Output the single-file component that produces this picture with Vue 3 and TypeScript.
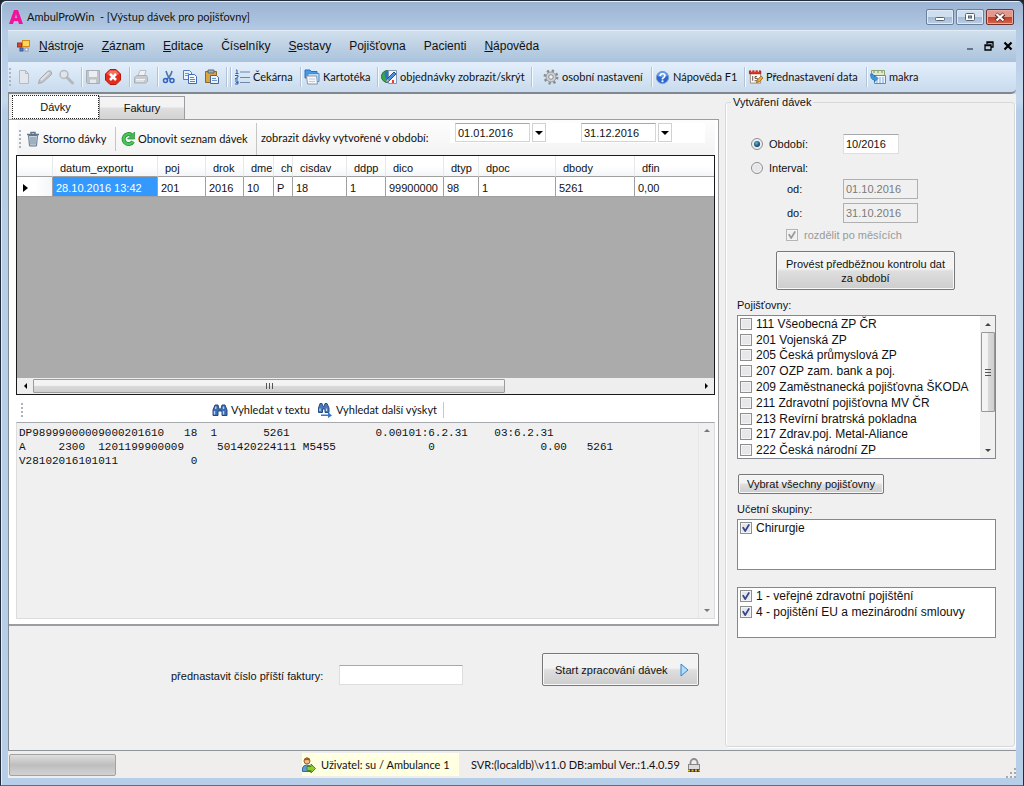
<script setup lang="ts">
import { ref } from 'vue'

interface MenuItem { key: string; rest: string }
interface CheckItem { label: string; checked: boolean }
interface Column { name: string; value: string; width: number }

const menu: MenuItem[] = [
  { key: 'N', rest: 'ástroje' },
  { key: 'Z', rest: 'áznam' },
  { key: 'E', rest: 'ditace' },
  { key: '', rest: 'Číselníky' },
  { key: 'S', rest: 'estavy' },
  { key: '', rest: 'Pojišťovna' },
  { key: '', rest: 'Pacienti' },
  { key: 'N', rest: 'ápověda' },
]

const columns: Column[] = [
  { name: 'datum_exportu', value: '28.10.2016 13:42', width: 105 },
  { name: 'poj', value: '201', width: 48 },
  { name: 'drok', value: '2016', width: 38 },
  { name: 'dme', value: '10', width: 30 },
  { name: 'ch', value: 'P', width: 19 },
  { name: 'cisdav', value: '18', width: 54 },
  { name: 'ddpp', value: '1', width: 39 },
  { name: 'dico', value: '99900000', width: 58 },
  { name: 'dtyp', value: '98', width: 35 },
  { name: 'dpoc', value: '1', width: 77 },
  { name: 'dbody', value: '5261', width: 79 },
  { name: 'dfin', value: '0,00', width: 79 },
]

const insurers = ref<CheckItem[]>([
  '111 Všeobecná ZP ČR',
  '201 Vojenská ZP',
  '205 Česká průmyslová ZP',
  '207 OZP zam. bank a poj.',
  '209 Zaměstnanecká pojišťovna ŠKODA',
  '211 Zdravotní pojišťovna MV ČR',
  '213 Revírní bratrská pokladna',
  '217 Zdrav.poj. Metal-Aliance',
  '222 Česká národní ZP',
].map((label) => ({ label, checked: false })))

const groups = ref<CheckItem[]>([{ label: 'Chirurgie', checked: true }])
const kinds = ref<CheckItem[]>([
  { label: '1 - veřejné zdravotní pojištění', checked: true },
  { label: '4 - pojištění EU a mezinárodní smlouvy', checked: true },
])

/* Fixed-width record: each field starts at its own character column. */
function record(fields: [number, string][]): string {
  return fields.reduce((line, [at, text]) => line.padEnd(at) + text, '')
}
const batchText = ref([
  record([[0, 'DP98999000009000201610'], [25, '18'], [29, '1'], [37, '5261'], [54, '0.00101:6.2.31'], [72, '03:6.2.31']]),
  record([[0, 'A'], [6, '2300'], [12, '1201199900009'], [30, '501420224111'], [43, 'M5455'], [62, '0'], [79, '0.00'], [86, '5261']]),
  record([[0, 'V28102016101011'], [26, '0']]),
].join('\n'))

const mode = ref('obdobi')
const dateFrom = ref('01.01.2016')
const dateTo = ref('31.12.2016')
const period = ref('10/2016')
const invoiceNo = ref('')

function selectAll() {
  insurers.value.forEach((i) => { i.checked = true })
}
</script>

<template>
  <div class="window">
    <header class="titlebar">
      <svg class="logo" viewBox="0 0 14 14" width="14" height="14"><path d="M0 14 5 0h4l5 14h-4l-1-3H5l-1 3ZM6 8h2L7 4Z" fill="#f0149b" fill-rule="evenodd" /></svg>
      <h1>AmbulProWin&nbsp; - [Výstup dávek pro pojišťovny]</h1>
      <div class="winbtns">
        <button aria-label="Minimalizovat"><svg width="12" height="10" viewBox="0 0 12 10"><rect x="1.500" y="5.500" width="9" height="3" rx="1" fill="#fff" stroke="#56616f" /></svg></button>
        <button aria-label="Obnovit okno"><svg width="12" height="10" viewBox="0 0 12 10"><rect x="1.500" y="1.500" width="9" height="7" rx="1" fill="#fff" stroke="#56616f" /><rect x="4.500" y="4" width="3" height="2" fill="#9cb4d0" stroke="#56616f" /></svg></button>
        <button class="close" aria-label="Zavřít"><svg width="12" height="10" viewBox="0 0 12 10"><path d="m2 2 8 6.500M10 2 2 8.500" stroke="#5d2c2c" stroke-width="4" /><path d="m2.500 2 7 6.500M9.500 2l-7 6.500" stroke="#fff" stroke-width="2.200" /></svg></button>
      </div>
    </header>

    <nav class="menubar">
      <svg class="appicon" width="13" height="12" viewBox="0 0 13 12"><rect x="5.500" y=".5" width="7" height="6" fill="#ffd65a" stroke="#d28a1c" /><rect x=".5" y="3" width="4" height="4" fill="#d8432c" stroke="#9c3424" /><rect x="3" y="8" width="3" height="3" fill="#5a7fd0" stroke="#36549c" /><rect x="8" y="8" width="3" height="3" fill="#fff" stroke="#8496b0" /></svg>
      <button v-for="m in menu" :key="m.key + m.rest"><u v-if="m.key">{{ m.key }}</u>{{ m.rest }}</button>
      <div class="mdibtns">
        <button aria-label="Minimalizovat dokument"><svg width="10" height="10" viewBox="0 0 10 10"><path d="M2 8h6" stroke="#4c5663" stroke-width="1.500" /></svg></button>
        <button aria-label="Obnovit dokument"><svg width="10" height="10" viewBox="0 0 10 10"><path d="M3 3V1h6v5H7M1 4h6v5H1ZM3 1.500h6M1 4.500h6" fill="none" stroke="#000" stroke-width="1.300" /></svg></button>
        <button aria-label="Zavřít dokument"><svg width="10" height="10" viewBox="0 0 10 10"><path d="m1.500 1.500 7 7M8.500 1.500l-7 7" stroke="#000" stroke-width="2.200" /></svg></button>
      </div>
    </nav>

    <div class="toolbar">
      <div class="tg first">
        <span class="grip"></span>
        <button aria-label="Nový"><svg width="16" height="16" viewBox="0 0 16 16"><path d="M3.500 1.500h6l3 3v10h-9Z" fill="#e3e6ea" stroke="#b4bac2" /><path d="M9.500 1.500v3h3" fill="none" stroke="#b4bac2" /></svg></button>
        <button aria-label="Upravit"><svg width="16" height="16" viewBox="0 0 16 16"><path d="m1.500 14.500 1-4 8-8q2-1.500 3.500 0t0 3.500l-8.500 7.500Z" fill="#c4c8ce" stroke="#a2a8b0" /><path d="m4 11 8-7.500" stroke="#e6e8eb" stroke-width="1.500" /></svg></button>
        <button aria-label="Hledat"><svg width="16" height="16" viewBox="0 0 16 16"><circle cx="6" cy="5.500" r="4" fill="#e0e5ea" stroke="#b4bac2" stroke-width="1.500" /><path d="m9 8.500 5.500 5.500" stroke="#b4b8be" stroke-width="3" stroke-linecap="round" /></svg></button>
      </div>
      <div class="tg">
        <button aria-label="Uložit"><svg width="16" height="16" viewBox="0 0 16 16"><path d="M1.500 1.500h13v13h-12l-1-1Z" fill="#bfc4ca" stroke="#a7adb5" /><path d="M4 2h8v6H4Z" fill="#eceff2" /><path d="M5 10.500h6V14H5Z" fill="#e5e8ec" /></svg></button>
        <button aria-label="Storno"><svg width="16" height="16" viewBox="0 0 16 16"><path d="M5 .5h6L15.500 5v6L11 15.500H5L.5 11V5Z" fill="#e42c1c" stroke="#b3170d" /><path d="M5 1.500h6L14 5Q8 8 2 5Z" fill="#f4735f" /><path d="m5 5 6 6M11 5l-6 6" stroke="#fff" stroke-width="2.500" /></svg></button>
      </div>
      <div class="tg">
        <button aria-label="Tisk"><svg width="16" height="16" viewBox="0 0 16 16"><path d="m5 7 2-5.500h6L11.500 7" fill="#f0f2f5" stroke="#b9bec5" /><path d="M1.500 8.500 4 6.500h9.500l1 2v4l-2 1.500h-11Z" fill="#c8ccd1" stroke="#a9afb7" /><path d="M3 10.500h9M3 12h8" stroke="#f3f4f6" /></svg></button>
      </div>
      <div class="tg wide">
        <button aria-label="Vyjmout"><svg width="14" height="16" viewBox="0 0 14 16"><path d="M4 2q1 5 5 9M10 2Q9 7 4 11" fill="none" stroke="#5475a5" stroke-width="1.600" /><circle cx="3.500" cy="11.500" r="2" fill="none" stroke="#2e64c4" stroke-width="1.500" /><circle cx="10" cy="11.500" r="2" fill="none" stroke="#2e64c4" stroke-width="1.500" /></svg></button>
        <button aria-label="Kopírovat"><svg width="16" height="16" viewBox="0 0 16 16"><path d="M1.500 1.500h6l2 2v7h-8Z" fill="#e8f1fd" stroke="#4d7ec8" /><path d="M3 4.500h4M3 6.500h4" stroke="#6c9be0" /><path d="M6.500 5.500h6l2 2v7h-8Z" fill="#f5f9ff" stroke="#3c6cb8" /><path d="M8 8.500h4M8 10.500h5M8 12.500h5" stroke="#5186d8" /></svg></button>
        <button aria-label="Vložit"><svg width="16" height="16" viewBox="0 0 16 16"><path d="M1.500 2.500h11v11h-11Z" fill="#d8a545" stroke="#8c6728" /><path d="M4 1h6v3H4Z" fill="#a4acb8" stroke="#606873" /><path d="M6.500 6.500h6l2 2v6h-8Z" fill="#edf3fb" stroke="#49658f" /><path d="M8 9.500h4M8 11.500h5" stroke="#6c94cc" /></svg></button>
      </div>
      <div class="tg"></div>
      <div class="tg">
        <button><svg width="16" height="16" viewBox="0 0 16 16"><path d="M2 1h1v3M1.500 4.500h3M1 6.500h3v1.500L1 10h3M1 12h3v3H1M2 13.500h2" fill="none" stroke="#2c5fae" /><path d="M6 3h10M6 8.500h10M6 13.500h10" stroke="#6d87a6" /></svg>Čekárna</button>
      </div>
      <div class="tg">
        <button><svg width="16" height="16" viewBox="0 0 16 16"><path d="M1 3.500V1h5l1 1.500h6V9H1Z" fill="#469ae8" stroke="#2a6fbe" /><path d="M4 4.500h11v8H4Z" fill="#b8ddfb" stroke="#4789cc" /><path d="M2.500 7h10l1 8h-10Z" fill="#f5f8fb" stroke="#8a98a8" /><path d="M5 10h6M5 12.500h6" stroke="#c2cad4" /></svg>Kartotéka</button>
      </div>
      <div class="tg">
        <button><svg width="16" height="16" viewBox="0 0 16 16"><circle cx="6.500" cy="7.500" r="6" fill="#39a943" stroke="#237032" /><path d="M7 1.500q-5 1-3 6 1 4 3.500 6Q14 12 11 3Z" fill="#2d74c7" /><path d="M7.500 1.500h8v13h-8Z" fill="#f6f8fb" stroke="#8496b0" /><path d="m5 13 1-3 7-7 2 2-7 7Z" fill="#4a91e0" stroke="#215596" /><path d="m5 13 1-3 2 2Z" fill="#f1be70" /><path d="M12 11v3" stroke="#e04432" stroke-width="2" /></svg>objednávky zobrazit/skrýt</button>
      </div>
      <div class="tg gear">
        <button><svg width="16" height="16" viewBox="0 0 16 16"><circle cx="8" cy="8" r="6" fill="none" stroke="#898c91" stroke-width="3" stroke-dasharray="2.200 2.512" /><circle cx="8" cy="8" r="5" fill="#cfd1d4" stroke="#96999e" /><circle cx="8" cy="8" r="2.300" fill="#eef4fa" stroke="#8a8d92" /></svg>osobní nastavení</button>
      </div>
      <div class="tg">
        <button><svg width="15" height="15" viewBox="0 0 16 16"><circle cx="8" cy="8" r="6.500" fill="#2b66cd" stroke="#7e9cc9" /><path d="M2.500 6.500a5.500 5.500 0 0 1 11 0Q8 9 2.500 6.500" fill="#669bea" /><path d="M5.500 6.500q0-2.500 2.500-2.500t2.500 2Q10.500 7.500 8 9v1" fill="none" stroke="#fff" stroke-width="1.800" /><rect x="7" y="11" width="2" height="2" fill="#fff" /></svg>Nápověda F1</button>
      </div>
      <div class="tg">
        <button><svg width="15" height="16" viewBox="0 0 16 16"><path d="M2.500 2.500h11v12h-11Z" fill="#fffaf3" stroke="#97867b" /><path d="M1.500 1.500h12v3h-12Z" fill="#d8392b" stroke="#a32219" /><path d="M4 .5v2M7.500.5v2M11 .5v2" stroke="#fff" /><path d="M5 7v5M9.500 7.500H7.500v2H10v2.500H7" fill="none" stroke="#5b4d48" /><path d="m9 14 1-3 4-4 2 2-4 4Z" fill="#f2ac38" stroke="#9e6a22" /></svg>Přednastavení data</button>
      </div>
      <div class="tg">
        <button><svg width="16" height="16" viewBox="0 0 16 16"><path d="M1.500 1.500h13v5h-13Z" fill="#e2ebd2" stroke="#8ea275" /><path d="M3 3h2M7 3h2M11 3h2" stroke="#6a9346" /><path d="M4.500 6.500h11v8h-11Z" fill="#f1f6fc" stroke="#5a8bc2" /><path d="M6 9h8M6 11h8M6 13h8" stroke="#7aa6db" stroke-dasharray="2 1" /><path d="M.5 5q0 6 4 6v2l3.500-3.500L4.500 6v2Q3 8 3 5Z" fill="#3e97dd" stroke="#2068aa" stroke-width=".6" /></svg>makra</button>
      </div>
    </div>

    <main class="content">
      <section class="left">
        <div class="tabs" role="tablist">
          <button role="tab" class="tab active" aria-selected="true">Dávky</button>
          <button role="tab" class="tab" aria-selected="false">Faktury</button>
        </div>
        <div class="panel">
          <div class="ptools">
            <div class="pg">
              <span class="grip"></span>
              <button><svg width="14" height="16" viewBox="0 0 14 16"><path d="M2.500 4.500h9l-1 10.500h-7Z" fill="#cbd5df" stroke="#61788f" /><path d="M5 6v7.500M7 6v7.500M9 6v7.500" stroke="#738ba3" /><path d="M1 3.500h12M5 3V1.500h4V3" fill="none" stroke="#61788f" stroke-width="1.500" /></svg>Storno dávky</button>
            </div>
            <div class="pg">
              <button><svg width="14" height="16" viewBox="0 0 14 16"><path d="M12 10.500A5 5 0 1 1 10.500 4" fill="none" stroke="#27943a" stroke-width="4" /><path d="M12 10.500A5 5 0 1 1 10.500 4" fill="none" stroke="#4dc45b" stroke-width="2.400" /><path d="M13.500 1v7h-7Z" fill="#44b853" stroke="#27943a" stroke-width=".7" /></svg>Obnovit seznam dávek</button>
            </div>
            <div class="pg range">
              <span class="rangelabel">zobrazit dávky vytvořené v období:</span>
              <div class="dates">
                <div class="combo"><input v-model="dateFrom" type="text" aria-label="Datum od" /><button aria-label="Vybrat datum od"><i></i></button></div>
                <div class="combo"><input v-model="dateTo" type="text" aria-label="Datum do" /><button aria-label="Vybrat datum do"><i></i></button></div>
              </div>
            </div>
          </div>

          <div class="gridbox">
            <div class="gridarea">
              <table>
                <colgroup><col width="36" /><col v-for="(c, n) in columns" :key="c.name" :width="n < columns.length - 1 ? c.width : undefined" /></colgroup>
                <thead><tr><th></th><th v-for="c in columns" :key="c.name">{{ c.name }}</th></tr></thead>
                <tbody>
                  <tr>
                    <td class="rowhead"><i class="tri-right"></i></td>
                    <td v-for="(c, n) in columns" :key="c.name" :class="{ sel: n === 0 }">{{ c.value }}</td>
                  </tr>
                </tbody>
              </table>
            </div>
            <div class="hscroll">
              <button aria-label="Posunout vlevo"><i class="tri-left"></i></button>
              <div class="htrack"><div class="hthumb"><i></i></div></div>
              <button aria-label="Posunout vpravo"><i class="tri-right small"></i></button>
            </div>
          </div>

          <div class="finder">
            <span class="grip"></span>
            <div class="findbtns">
              <button><svg width="16" height="14" viewBox="0 0 16 14"><path d="M1 12.500V7l2-5h3l1 4h2l1-4h3l2 5v5.500h-5V8H6v4.500Z" fill="#3d6cb0" stroke="#24497f" /><path d="M2.500 8v3.500M11.500 8v3.500M4 3.500 3.500 6M11.500 3.500V6" stroke="#b5d0f2" stroke-width="1.400" /></svg>Vyhledat v textu</button>
              <button><svg width="16" height="16" viewBox="0 0 16 16"><path d="M1.500 10.500V6L3 1.500h2l1 3h1l1-3h2L12 6v4.500H8V7H5.500v3.500Z" fill="#4b78b9" stroke="#284d83" /><path d="M3 6.500V9M9.500 6.500V9" stroke="#c0d7f4" stroke-width="1.300" /><path d="M4 12.500h7V10l4 3.500-4 2.500v-2H4Z" fill="#3277cc" /></svg>Vyhledat další výskyt</button>
            </div>
          </div>

          <div class="textbox">
            <textarea v-model="batchText" readonly wrap="off" aria-label="Obsah dávky"></textarea>
            <div class="vscroll dim"><i class="tri-up"></i><i class="tri-down"></i></div>
          </div>
        </div>

        <div class="startrow">
          <label for="invoice">přednastavit číslo příští faktury:</label>
          <input id="invoice" v-model="invoiceNo" type="text" />
          <button class="btn start">Start zpracování dávek<svg width="9" height="14" viewBox="0 0 9 14"><path d="M1 1v12l7-6Z" fill="#b2dbf8" stroke="#3485cf" /></svg></button>
        </div>
      </section>

      <fieldset class="right">
        <legend>Vytváření dávek</legend>
        <div class="period">
          <label class="opt"><input v-model="mode" type="radio" name="mode" value="obdobi" />Období:</label>
          <input v-model="period" class="field short" type="text" aria-label="Období" />
          <label class="opt"><input v-model="mode" type="radio" name="mode" value="interval" />Interval:</label>
          <span></span>
          <label class="sub" for="od">od:</label>
          <input id="od" class="field" type="text" value="01.10.2016" disabled />
          <label class="sub" for="do">do:</label>
          <input id="do" class="field" type="text" value="31.10.2016" disabled />
          <label class="split"><input type="checkbox" checked disabled />rozdělit po měsících</label>
        </div>
        <button class="btn check">Provést předběžnou kontrolu dat<br />za období</button>

        <p class="cap">Pojišťovny:</p>
        <div class="list insurers">
          <div class="items">
            <label v-for="i in insurers" :key="i.label"><input v-model="i.checked" type="checkbox" />{{ i.label }}</label>
          </div>
          <div class="vscroll"><i class="tri-up"></i><div class="vthumb"><i></i></div><i class="tri-down"></i></div>
        </div>
        <button class="btn all" @click="selectAll">Vybrat všechny pojišťovny</button>

        <p class="cap">Učetní skupiny:</p>
        <div class="list box">
          <div class="items"><label v-for="i in groups" :key="i.label"><input v-model="i.checked" type="checkbox" />{{ i.label }}</label></div>
        </div>
        <div class="list box kinds">
          <div class="items"><label v-for="i in kinds" :key="i.label"><input v-model="i.checked" type="checkbox" />{{ i.label }}</label></div>
        </div>
      </fieldset>
    </main>

    <footer class="status">
      <div class="progress" role="progressbar" aria-label="Průběh"></div>
      <div class="user">
        <svg width="14" height="16" viewBox="0 0 14 16"><circle cx="5" cy="4" r="3" fill="#eebd8c" stroke="#9b5a24" /><path d="M2 3.500Q3 0 5 .5q3 0 3 3-3-1-6 0" fill="#a65c25" /><path d="M.5 14.500V11Q1 8 5 8t4.500 3v3.500Z" fill="#5f9be0" stroke="#3b6ba6" /><path d="M5 9.500h4V7l4.500 4.500L9 16v-2.500H5Z" fill="#8ccc30" stroke="#4e861b" /></svg>
        Uživatel: su / Ambulance 1
      </div>
      <div class="server">SVR:(localdb)\v11.0 DB:ambul Ver.:1.4.0.59</div>
      <svg class="lock" width="14" height="14" viewBox="0 0 14 14"><path d="M3.500 8V4.500a3.500 3.500 0 0 1 7 0V8" fill="none" stroke="#8e8e8e" stroke-width="1.800" /><rect x="1.500" y="6.500" width="11" height="7" fill="#dcdcdc" stroke="#868686" /><path d="M1 12.500h12" stroke="#3c372d" stroke-width="3" /><path d="M1 12.500h12" stroke="#e5b73a" stroke-width="2" stroke-dasharray="2 1.500" /></svg>
      <svg class="sizer" width="10" height="10" viewBox="0 0 10 10"><path d="M8 1h2M4 5h2M8 5h2M0 9h2M4 9h2M8 9h2" stroke="#a9a9a9" stroke-width="2" /></svg>
    </footer>
  </div>
</template>

<style>
body {
  margin: 0;
  background: #1b2531;
}
</style>

<style scoped>
* {
  box-sizing: border-box;
}
button,
input,
textarea {
  margin: 0;
  font: inherit;
  color: inherit;
}
button {
  padding: 0;
  border: 0;
  background: none;
  white-space: nowrap;
}
svg {
  display: block;
  flex: none;
}
.window {
  display: flex;
  flex-direction: column;
  min-height: 100vh;
  padding: 1px 7px 7px;
  border: 1px solid #232c38;
  border-bottom-color: #0f8fa0;
  border-radius: 6px 6px 0 0;
  background: linear-gradient(#9ab3d1, #b4cae5 30px, #c5d9ed 100px, #b6cde8 110px, #b6cee8);
  box-shadow: inset 1px 1px 0 #e4eefa;
  font: 11px/14px "Liberation Sans", Arial, sans-serif;
  color: #111;
}

/* Title and menu */
.titlebar {
  display: flex;
  align-items: center;
  height: 28px;
  padding: 2px 2px 0 1px;
}
h1 {
  flex: 1;
  margin: 0 0 0 4px;
  font: 11px/16px Lato, sans-serif;
}
.winbtns {
  display: flex;
  gap: 2px;
  padding-bottom: 1px;
}
.winbtns button {
  display: grid;
  place-items: center;
  width: 28px;
  height: 16px;
  border: 1px solid #6c7f98;
  border-radius: 2px;
  background: linear-gradient(#cfdeef 48%, #a3bad7 50%, #b9cee6);
  box-shadow: inset 0 0 0 1px #dfeaf6;
}
.winbtns .close {
  border-color: #73312a;
  background: linear-gradient(#e2988c 48%, #c43c26 50%, #d0674f);
  box-shadow: inset 0 0 0 1px #eaaa9f;
}
.menubar {
  display: flex;
  align-items: center;
  gap: 18px;
  height: 32px;
  padding: 0 3px 2px 9px;
  border-top: 1px solid #e2ecf7;
  background: linear-gradient(#d0dfed, #bccfe2 55%, #a9c3de);
  font-size: 12px;
}
.appicon {
  margin-right: -9px;
}
.mdibtns {
  display: flex;
  gap: 9px;
  margin-left: auto;
}

/* Main toolbar */
.toolbar {
  display: grid;
  grid-template-columns: 73px 48px 28px 69px 4px 70px 77px 154px 120px 93px 122px 1fr;
  height: 32px;
  border-bottom: 2px solid #7f8791;
  border-radius: 0 0 5px 0;
  background: linear-gradient(#e3eefa, #d3e3f3 60%, #c8daed);
  font: 11px/16px Lato, sans-serif;
}
.tg {
  display: flex;
  align-items: center;
  gap: 4px;
  margin: 5px 0;
  padding-left: 3px;
  border-left: 1px solid #b3c3d5;
  box-shadow: inset 1px 0 0 #f5faff;
}
.tg.first {
  gap: 5px;
  padding-left: 1px;
  border: 0;
  box-shadow: none;
}
.tg.wide {
  gap: 6px;
  padding-left: 4px;
}
.tg.gear {
  padding-left: 11px;
}
.tg button,
.pg button,
.findbtns button {
  display: flex;
  align-items: center;
  gap: 3px;
}
.grip {
  flex: none;
  width: 2px;
  height: 18px;
  background: repeating-linear-gradient(#aab4c0 0 2px, transparent 2px 4px);
}

/* Work area */
.content {
  display: flex;
  flex: 1;
  gap: 6px;
  border-left: 1px solid #84898f;
  background: #f0f0f0;
}
.left {
  display: flex;
  flex: 1;
  flex-direction: column;
  min-width: 0;
}
.tabs {
  display: flex;
  align-items: flex-end;
  height: 25px;
  padding-left: 3px;
}
.tab {
  width: 86px;
  height: 23px;
  border: 1px solid #9a9da1;
  border-bottom: 0;
  background: linear-gradient(#f3f3f3 45%, #dfdfdf 50%, #d3d3d3);
}
.tab.active {
  width: 87px;
  height: 24px;
  border: 1px dotted #222;
  background: #fff;
}
.panel {
  display: flex;
  flex: 1;
  flex-direction: column;
  padding: 0 3px 5px 7px;
  border: solid #9b9da1;
  border-width: 1px 1px 2px 0;
  background: #fff;
}
.ptools {
  display: grid;
  grid-template-columns: 98px 141px 1fr;
  height: 35px;
  padding-top: 3px;
  margin-left: 1px;
  background: linear-gradient(#fdfdfd, #f3f3f3);
  font: 11px/16px Lato, sans-serif;
}
.pg {
  display: flex;
  align-items: center;
  gap: 5px;
  margin: 4px 0;
  padding-left: 5px;
  border-left: 1px solid #c6c6c6;
}
.pg:first-child {
  padding-left: 2px;
  border: 0;
}
.pg.range {
  align-items: flex-start;
  justify-content: space-between;
  margin: 0;
  padding: 0 10px 0 4px;
}
.rangelabel {
  margin-top: 7px;
}
.dates {
  display: flex;
  gap: 35px;
  width: 255px;
  height: 20px;
  padding-left: 5px;
  background: #fff;
  font: 11px/14px "Liberation Sans", Arial, sans-serif;
}
.combo {
  display: flex;
  gap: 2px;
}
.combo input {
  width: 75px;
  height: 19px;
  padding: 0 2px;
  border: 1px solid #d5d5d5;
  border-top-color: #a5a9ae;
  background: #fff;
}
.combo button {
  display: grid;
  place-items: center;
  width: 14px;
  height: 19px;
  border: 1px solid #cfd2d5;
  background: #fff;
}
.combo i {
  border: 4px solid transparent;
  border-top-color: #000;
  border-bottom: 0;
}

/* Data grid */
.gridbox {
  display: flex;
  flex-direction: column;
  flex: 240 1 240px;
  border: 1px solid #1a1a1a;
  background: #ababab;
}
.gridarea {
  flex: 1;
}
table {
  width: 100%;
  table-layout: fixed;
  border-collapse: separate;
  border-spacing: 0;
  background: #fff;
}
th,
td {
  height: 20px;
  overflow: hidden;
  text-align: left;
  font-weight: normal;
  white-space: nowrap;
}
th {
  height: 21px;
  padding: 3px 0 0 7px;
  border-right: 1px solid #e6e8ea;
  border-bottom: 1px solid #a0a0a0;
  background: linear-gradient(#fff 50%, #f3f5f7);
}
td {
  padding: 2px 0 0 3px;
  border-right: 1px solid #a0a0a0;
  border-bottom: 1px solid #a0a0a0;
}
th:last-child,
td:last-child {
  border-right: 0;
}
td.sel {
  background: #3399ff;
  color: #fff;
}
td.rowhead {
  padding-left: 6px;
  background: linear-gradient(90deg, #fff 50%, #f3f5f7);
}
.tri-right,
.tri-left,
.tri-up,
.tri-down {
  display: block;
  width: 0;
  height: 0;
  border: 4px solid transparent;
}
.tri-right {
  border-left: 5px solid #000;
  border-right: 0;
}
.tri-right.small {
  border-width: 3px 0 3px 3px;
}
.tri-left {
  border-width: 3px 3px 3px 0;
  border-right-color: #000;
}
.tri-up {
  border-width: 0 3px 3px;
  border-bottom-color: #444;
}
.tri-down {
  border-width: 3px 3px 0;
  border-top-color: #444;
}
.hscroll {
  display: flex;
  height: 16px;
  background: #eee;
}
.hscroll button {
  display: grid;
  place-items: center;
  width: 16px;
}
.htrack {
  flex: 1;
  padding: 1px 0;
}
.hthumb {
  display: grid;
  place-items: center;
  width: 71%;
  height: 14px;
  border: 1px solid #9b9b9b;
  border-radius: 1px;
  background: linear-gradient(#f3f3f3 45%, #dadada 50%, #cfcfcf);
}
.hthumb i {
  width: 7px;
  height: 6px;
  background: repeating-linear-gradient(90deg, #555 0 1px, transparent 1px 3px);
}

/* Search row and batch text */
.finder {
  display: flex;
  align-items: center;
  height: 27px;
  padding: 2px 0 0 5px;
  font: 11px/16px Lato, sans-serif;
}
.finder .grip {
  height: 14px;
}
.findbtns {
  display: flex;
  gap: 7px;
  margin-left: 189px;
  padding-right: 6px;
  border-right: 1px solid #c8c8c8;
}
.textbox {
  display: flex;
  flex: 197 1 197px;
  border: 1px solid #dcdcdc;
  border-top-color: #a5a9ae;
  background: #f0f0f0;
}
textarea {
  flex: 1;
  min-width: 0;
  height: auto;
  padding: 3px 0 0 2px;
  border: 0;
  outline: 0;
  resize: none;
  overflow: hidden;
  background: transparent;
  font: 11px/14px "Liberation Mono", "Courier New", monospace;
}
.vscroll {
  display: flex;
  flex-direction: column;
  align-items: center;
  justify-content: space-between;
  width: 15px;
  padding: 6px 0;
  background: #f0f0f0;
}
.vscroll.dim {
  width: 16px;
  border-left: 1px solid #e2e2e2;
  opacity: 0.7;
}

/* Buttons */
.btn {
  border: 1px solid #777;
  border-radius: 2px;
  background: linear-gradient(#f3f3f3 45%, #dedede 52%, #cdcdcd);
  box-shadow: inset 0 0 0 1px #f8f8f8;
}
.startrow {
  display: flex;
  align-items: flex-start;
  height: 124px;
  padding: 27px 20px 0 162px;
}
.startrow label {
  margin-top: 16px;
}
.startrow input {
  width: 124px;
  height: 20px;
  margin: 12px auto 0 16px;
  padding: 0 3px;
  border: 1px solid #dedede;
  border-top-color: #a5a9ae;
  background: #fff;
}
.start {
  display: flex;
  align-items: center;
  justify-content: space-between;
  width: 157px;
  height: 33px;
  padding: 0 9px 0 12px;
}

/* Batch settings */
.right {
  width: 290px;
  margin: 1px 1px 3px 0;
  padding: 0 0 0 11px;
  border: 1px solid #d8d8d8;
  border-radius: 3px;
  box-shadow: inset 1px 0 0 #fff, 1px 1px 0 #fff;
}
legend {
  margin-left: -6px;
  padding: 0 2px;
}
.period {
  display: grid;
  grid-template-columns: 92px 1fr;
  grid-template-rows: 24px 23px 20px 28px 16px;
  align-items: center;
  margin: 23px 0 0 14px;
}
.field {
  width: 75px;
  height: 20px;
  padding: 0 2px;
  border: 1px solid #dedede;
  border-top-color: #a5a9ae;
  background: #fff;
}
.field.short {
  width: 56px;
}
.field:disabled {
  border-color: #b0b0b0;
  background: #f0f0f0;
  color: #7b7b7b;
}
.opt,
.split {
  display: flex;
  align-items: center;
  gap: 6px;
}
.sub {
  padding-left: 36px;
}
.split {
  grid-column: 1 / 3;
  padding-left: 35px;
  color: #999;
}
input[type="radio"],
input[type="checkbox"] {
  appearance: none;
  display: grid;
  place-items: center;
  flex: none;
  width: 12px;
  height: 12px;
  border: 1px solid #8e8f8f;
  background: #e5e7ea;
  box-shadow: inset 0 0 0 1px #f4f4f4;
}
input[type="radio"] {
  border-radius: 50%;
}
input[type="radio"]:checked::after {
  content: "";
  width: 6px;
  height: 6px;
  border-radius: 50%;
  background: radial-gradient(circle at 40% 35%, #5cb5dd, #123f60 70%);
}
input[type="checkbox"]:checked::after {
  content: "";
  width: 8px;
  height: 8px;
  background: #34468c;
  clip-path: polygon(0 45%, 20% 35%, 40% 65%, 80% 0, 100% 8%, 45% 100%, 35% 100%);
}
input[type="checkbox"]:disabled {
  border-color: #b5b5b5;
  background: #f0f0f0;
}
input[type="checkbox"]:disabled::after {
  background: #9a9a9a;
}
.check {
  display: block;
  width: 179px;
  height: 39px;
  margin: 8px 0 0 39px;
}
.cap {
  margin: 8px 0 3px;
}
.list {
  display: flex;
  width: 259px;
  border: 1px solid #828790;
  background: #fff;
  font-size: 12px;
}
.items {
  display: flex;
  flex: 1;
  flex-direction: column;
  padding-left: 2px;
}
.items label {
  display: flex;
  align-items: center;
  gap: 4px;
  height: 16px;
  white-space: nowrap;
}
.insurers {
  height: 144px;
}
.insurers label {
  flex: 1;
  height: auto;
}
.list .vscroll {
  padding: 7px 0 6px;
}
.vthumb {
  display: grid;
  place-items: center;
  width: 14px;
  height: 80px;
  margin: 6px 0 auto;
  border: 1px solid #979797;
  border-radius: 1px;
  background: linear-gradient(90deg, #f3f3f3 45%, #dadada 50%, #cfcfcf);
}
.vthumb i {
  width: 6px;
  height: 7px;
  background: repeating-linear-gradient(#555 0 1px, transparent 1px 3px);
}
.all {
  display: block;
  width: 146px;
  height: 20px;
  margin: 15px 0 0 1px;
}
.box {
  height: 51px;
}
.kinds {
  margin-top: 17px;
}

/* Status bar */
.status {
  display: grid;
  grid-template-columns: 108px 186px 157px 228px 1fr auto;
  align-items: center;
  height: 28px;
  border-top: 1px solid #8f949b;
  background: #f0eded;
  font: 11px/16px Lato, sans-serif;
}
.progress {
  height: 22px;
  margin-left: 1px;
  border: 1px solid #a2a2a2;
  border-radius: 2px;
  background: linear-gradient(#dedede, #bebebe 50%, #d2d2d2);
}
.user {
  display: flex;
  align-items: center;
  gap: 5px;
  grid-column: 3;
  height: 23px;
  background: #ffffe1;
}
.server {
  padding-left: 12px;
}
.sizer {
  align-self: end;
}
</style>
